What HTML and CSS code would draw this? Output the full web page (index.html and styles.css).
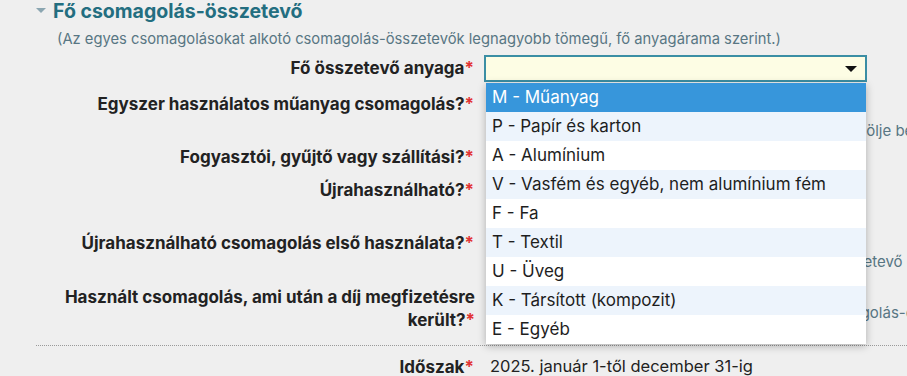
FILE: index.html
```html
<!DOCTYPE html>
<html lang="hu">
<head>
  <meta charset="UTF-8" />
  <meta name="viewport" content="width=device-width, initial-scale=1.0" />
  <title>Fő csomagolás-összetevő</title>
  <link rel="stylesheet" href="styles.css">
</head>
<body>
  <section class="fieldset">
    <h2 class="legend"><span class="caret"></span>Fő csomagolás-összetevő</h2>
    <p class="note">(Az egyes csomagolásokat alkotó csomagolás-összetevők legnagyobb tömegű, fő anyagárama szerint.)</p>

    <div class="row row-select">
      <label>Fő összetevő anyaga<span class="req">*</span></label>
      <div class="field">
        <div class="select">
          <span class="arrow"></span>
          <ul class="dropdown">
            <li class="active">M - Műanyag</li>
            <li>P - Papír és karton</li>
            <li>A - Alumínium</li>
            <li>V - Vasfém és egyéb, nem alumínium fém</li>
            <li>F - Fa</li>
            <li>T - Textil</li>
            <li>U - Üveg</li>
            <li>K - Társított (kompozit)</li>
            <li>E - Egyéb</li>
          </ul>
        </div>
      </div>
    </div>

    <div class="row row-tall">
      <label>Egyszer használatos műanyag csomagolás?<span class="req">*</span></label>
      <div class="field">
        <div class="radios"><span>Igen</span><span>Nem</span></div>
        <div class="hint hint-1">(Műanyag összetevő esetén kérjük, jelölje be a megfelelőt.)</div>
      </div>
    </div>

    <div class="row row-short">
      <label>Fogyasztói, gyűjtő vagy szállítási?<span class="req">*</span></label>
      <div class="field"><div class="radios"><span>Fogyasztói</span><span>Gyűjtő</span><span>Szállítási</span></div></div>
    </div>

    <div class="row row-tall">
      <label>Újrahasználható?<span class="req">*</span></label>
      <div class="field"><div class="radios"><span>Igen</span><span>Nem</span></div></div>
    </div>

    <div class="row row-tall2">
      <label>Újrahasználható csomagolás első használata?<span class="req">*</span></label>
      <div class="field">
        <div class="radios"><span>Igen</span><span>Nem</span></div>
        <div class="hint hint-2">(Csak újrahasználható csomagolás-összetevő esetén.)</div>
      </div>
    </div>

    <div class="row row-last">
      <label>Használt csomagolás, ami után a díj megfizetésre került?<span class="req">*</span></label>
      <div class="field">
        <div class="radios"><span>Igen</span><span>Nem</span></div>
        <div class="hint hint-3">(Újrafelhasznált csomagolás-összetevő esetén.)</div>
      </div>
    </div>

    <div class="row row-period">
      <label>Időszak<span class="req">*</span></label>
      <div class="field value">2025. január 1-től december 31-ig</div>
    </div>
  </section>
</body>
</html>
```

FILE: styles.css
```css
body {
  margin: 0;
  background: #efefef;
  font-family: Inter, Roboto, sans-serif;
  color: #222;
  overflow: hidden;
}

.fieldset {
  padding-left: 35px;
}

.legend {
  display: flex;
  align-items: center;
  margin: 0;
  height: 22px;
  font-size: 19.5px;
  font-weight: 700;
  color: #236e80;
}

.caret {
  width: 0;
  height: 0;
  border-left: 5px solid transparent;
  border-right: 5px solid transparent;
  border-top: 5px solid #8ba6b1;
  margin: 0 7px 2px 1px;
}

.note {
  margin: 7px 0 0 22px;
  font-size: 14.75px;
  line-height: 20px;
  color: #587683;
}

.row {
  display: grid;
  grid-template-columns: 439px 1fr;
  column-gap: 10px;
  align-items: start;
}

.row label {
  text-align: right;
  font-size: 17px;
  font-weight: 700;
  line-height: 23px;
  padding-top: 1px;
}

.req {
  color: #e23434;
}

.row-select {
  margin-top: 6px;
  height: 37px;
}

.row-select label {
  padding-top: 2px;
}

.row-tall {
  height: 53px;
}

.row-tall2 {
  height: 54px;
}

.row-short {
  height: 33px;
}

.row-last {
  height: 60px;
  border-bottom: 1px dotted #9a9a9a;
  margin-left: 1px;
}

.row-period {
  padding-top: 9px;
}

.field {
  position: relative;
  white-space: nowrap;
}

.select {
  position: relative;
  width: 379px;
  height: 23px;
  border: 2px solid #3b8ea4;
  background: #fdfde4;
}

.arrow {
  position: absolute;
  right: 8px;
  top: 9px;
  border-left: 6px solid transparent;
  border-right: 6px solid transparent;
  border-top: 6px solid #111;
}

.dropdown {
  position: absolute;
  top: 26px;
  left: 0;
  width: 380px;
  margin: 0;
  padding: 0;
  list-style: none;
  background: #fff;
  box-shadow: 0 2px 8px rgba(0, 0, 0, 0.28);
  z-index: 10;
}

.dropdown li {
  height: 29px;
  line-height: 29px;
  padding-left: 6px;
  font-size: 17px;
  color: #1e1e1e;
}

.dropdown li:nth-child(even) {
  background: #edf4fc;
}

.dropdown li.active {
  background: #3796db;
  color: #fff;
}

.radios {
  display: flex;
  gap: 16px;
  font-size: 15px;
  line-height: 18px;
  padding-left: 6px;
}

.hint {
  font-size: 15px;
  line-height: 20px;
  color: #587683;
}

.hint-1 {
  margin-top: 11px;
  padding-left: 111px;
}

.hint-2 {
  margin-top: 3px;
  padding-left: 93px;
}

.hint-3 {
  margin-top: 0;
  padding-left: 213px;
}

.value {
  font-size: 16.5px;
  line-height: 23px;
  padding-left: 6px;
}
```
